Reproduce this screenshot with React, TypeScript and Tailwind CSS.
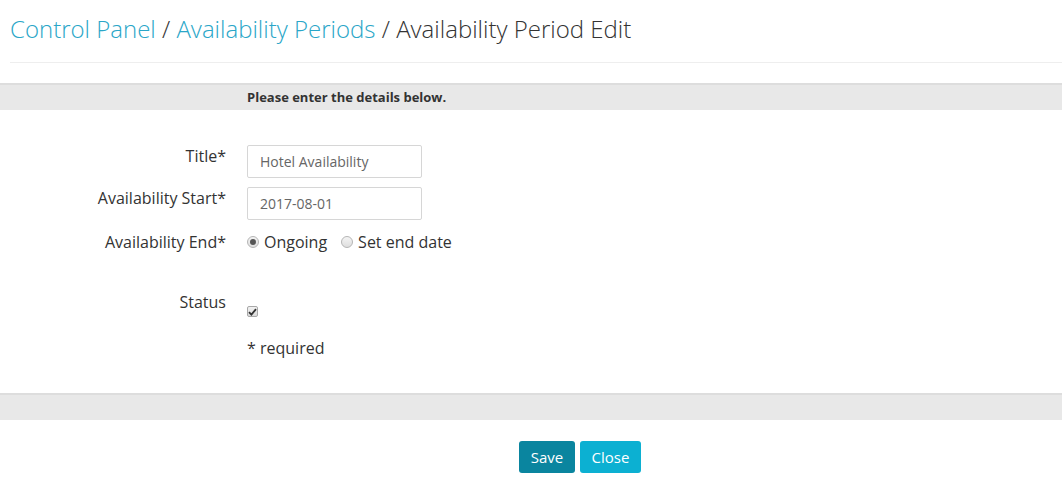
import React from "react";

const font = { fontFamily: '"Open Sans", "Liberation Sans", sans-serif' };

function Radio({ checked, label }: { checked?: boolean; label: string }) {
    return (
        <label className="flex items-center gap-[5px] text-[16px] text-[#333]">
            <span className="w-[12px] h-[12px] rounded-full border border-[#b5b5b5] bg-gradient-to-b from-[#f4f4f4] to-[#dedede] flex items-center justify-center">
                {checked && <span className="w-[6px] h-[6px] rounded-full bg-[#555]" />}
            </span>
            {label}
        </label>
    );
}

export default function App() {
    return (
        <div className="bg-white w-[1062px] h-[493px] overflow-hidden" style={font}>
            {/* Breadcrumb header */}
            <h1 className="pl-[10px] pt-[13px] text-[24px] leading-[32px] font-light text-[#333]">
                <span className="text-[#2aa6c8]">Control Panel</span> /{" "}
                <span className="text-[#2aa6c8]">Availability Periods</span> / Availability Period Edit
            </h1>
            <div className="ml-[10px] mt-[17px] border-t border-[#eeeeee]" />

            {/* Section band */}
            <div className="mt-[20px] border-t-2 border-[#dddddd] bg-[#e8e8e8] h-[27px] flex items-center pl-[247px]">
                <span className="text-[13px] font-bold text-[#333]">Please enter the details below.</span>
            </div>

            {/* Form */}
            <div className="pt-[35px] text-[16px] text-[#333] leading-[22px]">
                <div className="flex">
                    <div className="w-[226px] text-right">Title*</div>
                    <input
                        className="ml-[21px] w-[175px] h-[33px] border border-[#d6d6d6] rounded-[2px] px-[12px] text-[14px] text-[#666] outline-none"
                        style={font}
                        defaultValue="Hotel Availability"
                    />
                </div>
                <div className="flex mt-[9px]">
                    <div className="w-[226px] text-right">Availability Start*</div>
                    <input
                        className="ml-[21px] w-[175px] h-[33px] border border-[#d6d6d6] rounded-[2px] px-[12px] text-[14px] text-[#666] outline-none"
                        style={font}
                        defaultValue="2017-08-01"
                    />
                </div>
                <div className="flex mt-[11px]">
                    <div className="w-[226px] text-right">Availability End*</div>
                    <div className="ml-[21px] flex items-center gap-[14px]">
                        <Radio checked label="Ongoing" />
                        <Radio label="Set end date" />
                    </div>
                </div>
                <div className="flex mt-[38px]">
                    <div className="w-[226px] text-right">Status</div>
                    <div className="ml-[21px] pt-[15px]">
                        <span className="w-[11px] h-[11px] rounded-[2px] border border-[#a8a8a8] bg-gradient-to-b from-[#f2f2f2] to-[#d9d9d9] flex items-center justify-center">
                            <svg width="9" height="8" viewBox="0 0 9 8">
                                <path d="M1 4.2 L3.4 6.6 L8 1.2" fill="none" stroke="#333" strokeWidth="1.8" />
                            </svg>
                        </span>
                    </div>
                </div>
                <div className="pl-[247px] mt-[20px]">* required</div>
            </div>

            {/* Bottom band */}
            <div className="mt-[34px] border-t-2 border-[#dddddd] bg-[#e8e8e8] h-[27px]" />

            <div className="flex justify-center gap-[5px] mt-[21px] pl-[98px]">
                <button className="h-[32px] w-[56px] rounded-[3px] bg-[#0a859f] text-white text-[15px]">Save</button>
                <button className="h-[32px] w-[61px] rounded-[3px] bg-[#0cb0d2] text-white text-[15px]">Close</button>
            </div>
        </div>
    );
}
